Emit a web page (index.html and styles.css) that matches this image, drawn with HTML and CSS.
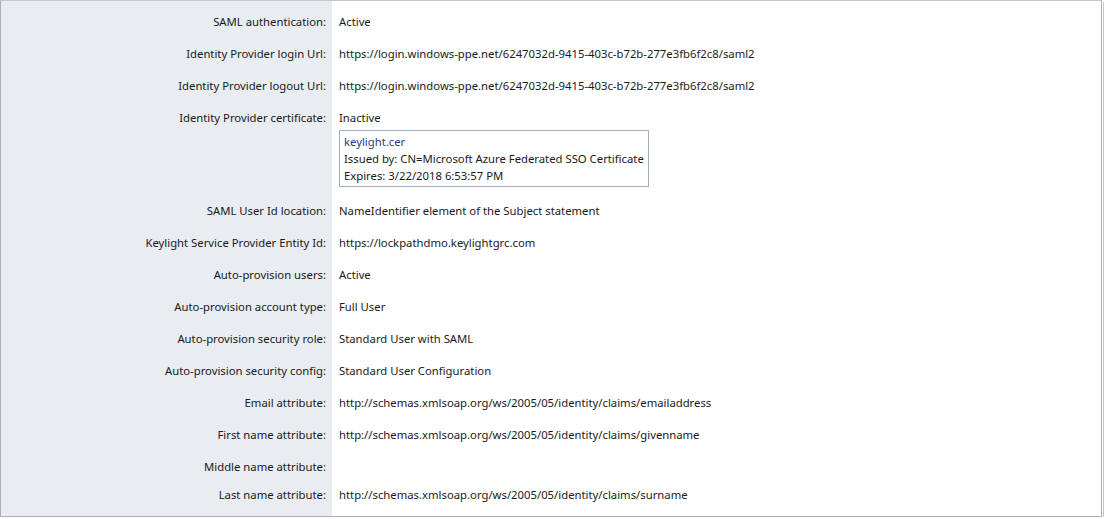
FILE: index.html
```html
<!DOCTYPE html>
<html>
<head>
<meta charset="utf-8">
<link rel="stylesheet" href="styles.css">
</head>
<body>
<div class="panel">
  <div class="row"><div class="label">SAML authentication:</div><div class="value">Active</div></div>
  <div class="row"><div class="label">Identity Provider login Url:</div><div class="value">https://login.windows-ppe.net/6247032d-9415-403c-b72b-277e3fb6f2c8/saml2</div></div>
  <div class="row"><div class="label">Identity Provider logout Url:</div><div class="value">https://login.windows-ppe.net/6247032d-9415-403c-b72b-277e3fb6f2c8/saml2</div></div>
  <div class="row row-tall">
    <div class="label">Identity Provider certificate:</div>
    <div class="value">
      <div class="line">Inactive</div>
      <div class="cert">
        <a class="cert-link" href="#">keylight.cer</a>
        <div>Issued by: CN=Microsoft Azure Federated SSO Certificate</div>
        <div>Expires: 3/22/2018 6:53:57 PM</div>
      </div>
    </div>
  </div>
  <div class="row"><div class="label">SAML User Id location:</div><div class="value">NameIdentifier element of the Subject statement</div></div>
  <div class="row"><div class="label">Keylight Service Provider Entity Id:</div><div class="value">https://lockpathdmo.keylightgrc.com</div></div>
  <div class="row"><div class="label">Auto-provision users:</div><div class="value">Active</div></div>
  <div class="row"><div class="label">Auto-provision account type:</div><div class="value">Full User</div></div>
  <div class="row"><div class="label">Auto-provision security role:</div><div class="value">Standard User with SAML</div></div>
  <div class="row"><div class="label">Auto-provision security config:</div><div class="value">Standard User Configuration</div></div>
  <div class="row"><div class="label">Email attribute:</div><div class="value">http://schemas.xmlsoap.org/ws/2005/05/identity/claims/emailaddress</div></div>
  <div class="row"><div class="label">First name attribute:</div><div class="value">http://schemas.xmlsoap.org/ws/2005/05/identity/claims/givenname</div></div>
  <div class="row"><div class="label">Middle name attribute:</div><div class="value"></div></div>
  <div class="row row-last"><div class="label">Last name attribute:</div><div class="value">http://schemas.xmlsoap.org/ws/2005/05/identity/claims/surname</div></div>
</div>
</body>
</html>
```
FILE: styles.css
```css
html, body {
  margin: 0;
  padding: 0;
  background: #ffffff;
}
body {
  font-family: "Noto Sans", "Open Sans", sans-serif;
  font-size: 11.3px;
  color: #1a1a1a;
}
.panel {
  box-sizing: border-box;
  width: 1102px;
  height: 517px;
  overflow: hidden;
  border-top: 1px solid #c8c8c8;
  border-left: 1px solid #a9afb8;
  border-right: 1px solid #a7afba;
  border-bottom: 1px solid #a7afba;
  box-shadow: 1px 1px 0 #ffffff, 2px 2px 0 #c3c8cf;
  padding-top: 5px;
  background: linear-gradient(to right, #e9ecf1 331px, #ffffff 331px);
  display: flex;
  flex-direction: column;
}
.row {
  display: flex;
  align-items: center;
  height: 32px;
  line-height: 16px;
  flex: none;
}
.row-last {
  height: 24px;
}
.row-tall {
  height: auto;
  align-items: flex-start;
  padding: 8px 0 8px;
}
.label {
  width: 331px;
  box-sizing: border-box;
  padding-right: 6px;
  text-align: right;
  flex: none;
  white-space: nowrap;
}
.value {
  padding-left: 7px;
  white-space: nowrap;
}
.cert {
  margin-top: 4px;
  width: 310px;
  box-sizing: border-box;
  border: 1px solid #a3aebf;
  padding: 2px 4px 2px;
  line-height: 17px;
}
.cert-link {
  display: block;
  color: #2e3a8f;
  text-decoration: none;
}
```
